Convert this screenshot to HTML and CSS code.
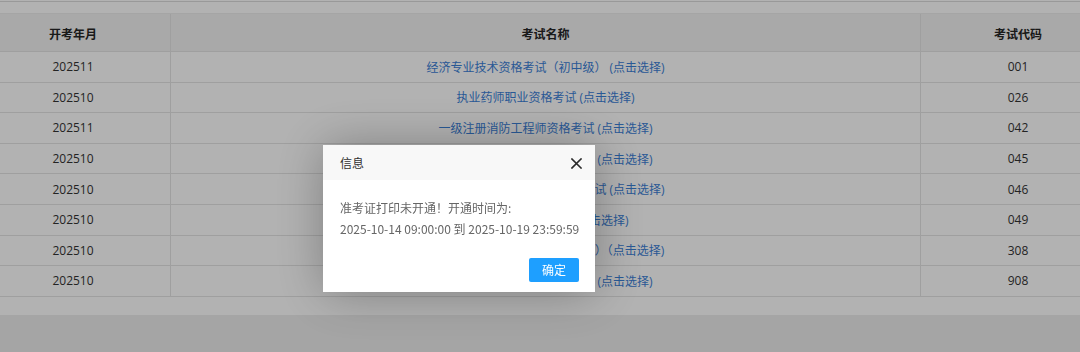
FILE: index.html
```html
<!DOCTYPE html>
<html lang="zh-CN">
<head>
<meta charset="utf-8">
<title>准考证打印</title>
<link rel="stylesheet" href="styles.css">
</head>
<body>
<div class="panel">
  <div class="topline"></div>
  <div class="topgap"></div>
  <div class="table">
    <div class="row head">
      <div class="cell">开考年月</div>
      <div class="cell">考试名称</div>
      <div class="cell">考试代码</div>
    </div>
    <div class="row">
      <div class="cell">202511</div>
      <div class="cell"><a class="link">经济专业技术资格考试（初中级） (点击选择)</a></div>
      <div class="cell">001</div>
    </div>
    <div class="row">
      <div class="cell">202510</div>
      <div class="cell"><a class="link">执业药师职业资格考试 (点击选择)</a></div>
      <div class="cell">026</div>
    </div>
    <div class="row">
      <div class="cell">202511</div>
      <div class="cell"><a class="link">一级注册消防工程师资格考试 (点击选择)</a></div>
      <div class="cell">042</div>
    </div>
    <div class="row">
      <div class="cell">202510</div>
      <div class="cell"><a class="link">二级造价工程师职业资格考试 (点击选择)</a></div>
      <div class="cell">045</div>
    </div>
    <div class="row">
      <div class="cell">202510</div>
      <div class="cell"><a class="link">环境影响评价工程师职业资格考试 (点击选择)</a></div>
      <div class="cell">046</div>
    </div>
    <div class="row">
      <div class="cell">202510</div>
      <div class="cell"><a class="link">税务师职业资格考试 (点击选择)</a></div>
      <div class="cell">049</div>
    </div>
    <div class="row">
      <div class="cell">202510</div>
      <div class="cell"><a class="link">统计专业技术资格考试（初中级）（点击选择)</a></div>
      <div class="cell">308</div>
    </div>
    <div class="row">
      <div class="cell">202510</div>
      <div class="cell"><a class="link">二级注册计量师职业资格考试 (点击选择)</a></div>
      <div class="cell">908</div>
    </div>
  </div>
  <div class="bottomgap"></div>
</div>

<div class="shade"></div>

<div class="layer">
  <div class="layer-title">
    <span>信息</span>
    <svg class="close" width="11" height="11" viewBox="0 0 11 11" aria-hidden="true">
      <path d="M1 1 L10 10 M10 1 L1 10" stroke="#2b2b2b" stroke-width="1.6" fill="none" stroke-linecap="square"/>
    </svg>
  </div>
  <div class="layer-content">
    <p>准考证打印未开通！开通时间为:</p>
    <p>2025-10-14 09:00:00 到 2025-10-19 23:59:59</p>
  </div>
  <div class="layer-btns">
    <a class="btn">确定</a>
  </div>
</div>
</body>
</html>
```

FILE: styles.css
```css
html, body {
  margin: 0;
  padding: 0;
}
body {
  width: 1080px;
  height: 352px;
  overflow: hidden;
  background: #ededed;
  font-family: "Open Sans", "Noto Sans CJK SC", sans-serif;
  font-size: 12px;
  color: #333;
}
.panel {
  background: #fff;
  padding-top: 1px;
}
.topline {
  height: 1px;
  background: #dcdcdc;
}
.topgap {
  height: 11px;
}
.table {
  margin-left: -24px;
  width: 1139px;
  border-top: 1px solid #ececec;
}
.row {
  display: grid;
  grid-template-columns: 195px 750px 194px;
  height: 30.6px;
  box-sizing: border-box;
  border-bottom: 1px solid #e4e4e4;
}
.row.head {
  height: 38px;
  background: #f2f2f2;
  font-weight: bold;
  color: #262626;
  font-size: 12px;
}
.row.head .cell {
  padding-top: 2px;
}
.cell {
  display: flex;
  align-items: center;
  justify-content: center;
  border-right: 1px solid #e4e4e4;
  white-space: nowrap;
}
.cell:last-child {
  border-right: none;
}
.link {
  color: #3b80d6;
  text-decoration: none;
}
.bottomgap {
  height: 18px;
}
.shade {
  position: fixed;
  inset: 0;
  background: #000;
  opacity: 0.3;
}
.layer {
  position: fixed;
  left: 323px;
  top: 145px;
  width: 272px;
  height: 147px;
  background: #fff;
  box-shadow: 1px 1px 50px rgba(0, 0, 0, 0.3);
  display: flex;
  flex-direction: column;
  font-family: "Noto Sans CJK SC", "Open Sans", sans-serif;
}
.layer-title {
  height: 35px;
  background: #f8f8f8;
  display: flex;
  align-items: center;
  justify-content: space-between;
  padding: 0 13px 0 17px;
  font-size: 12px;
  color: #333;
}
.close {
  display: block;
  margin-top: 1px;
}
.layer-content {
  padding: 17px 0 0 17px;
  color: #666;
  font-size: 12px;
  line-height: 21px;
  flex: 1;
  white-space: nowrap;
}
.layer-content p {
  margin: 0;
}
.layer-btns {
  display: flex;
  justify-content: flex-end;
  padding: 0 16px 10px 0;
}
.btn {
  display: block;
  width: 50px;
  height: 24px;
  line-height: 24px;
  text-align: center;
  background: #1e9fff;
  color: #fff;
  border-radius: 2px;
  font-size: 12px;
}
```
